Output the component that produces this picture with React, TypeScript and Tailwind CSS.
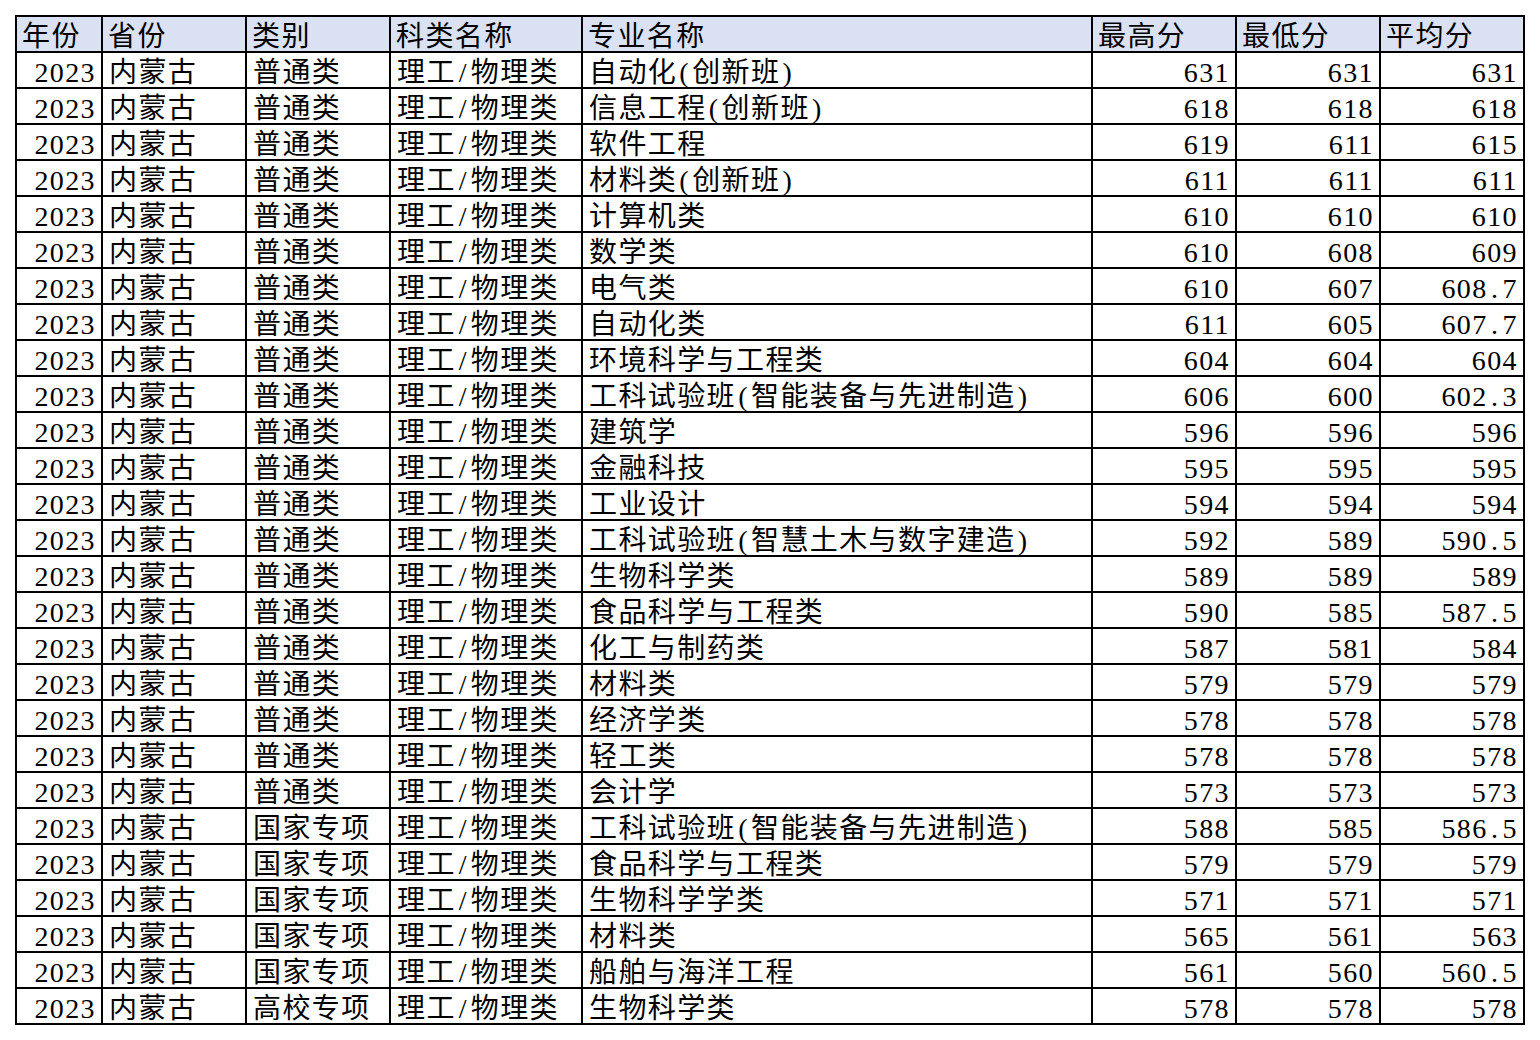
const rows: string[][] = [
  ["普通类", "理工/物理类", "自动化(创新班)", "631", "631", "631"],
  ["普通类", "理工/物理类", "信息工程(创新班)", "618", "618", "618"],
  ["普通类", "理工/物理类", "软件工程", "619", "611", "615"],
  ["普通类", "理工/物理类", "材料类(创新班)", "611", "611", "611"],
  ["普通类", "理工/物理类", "计算机类", "610", "610", "610"],
  ["普通类", "理工/物理类", "数学类", "610", "608", "609"],
  ["普通类", "理工/物理类", "电气类", "610", "607", "608.7"],
  ["普通类", "理工/物理类", "自动化类", "611", "605", "607.7"],
  ["普通类", "理工/物理类", "环境科学与工程类", "604", "604", "604"],
  ["普通类", "理工/物理类", "工科试验班(智能装备与先进制造)", "606", "600", "602.3"],
  ["普通类", "理工/物理类", "建筑学", "596", "596", "596"],
  ["普通类", "理工/物理类", "金融科技", "595", "595", "595"],
  ["普通类", "理工/物理类", "工业设计", "594", "594", "594"],
  ["普通类", "理工/物理类", "工科试验班(智慧土木与数字建造)", "592", "589", "590.5"],
  ["普通类", "理工/物理类", "生物科学类", "589", "589", "589"],
  ["普通类", "理工/物理类", "食品科学与工程类", "590", "585", "587.5"],
  ["普通类", "理工/物理类", "化工与制药类", "587", "581", "584"],
  ["普通类", "理工/物理类", "材料类", "579", "579", "579"],
  ["普通类", "理工/物理类", "经济学类", "578", "578", "578"],
  ["普通类", "理工/物理类", "轻工类", "578", "578", "578"],
  ["普通类", "理工/物理类", "会计学", "573", "573", "573"],
  ["国家专项", "理工/物理类", "工科试验班(智能装备与先进制造)", "588", "585", "586.5"],
  ["国家专项", "理工/物理类", "食品科学与工程类", "579", "579", "579"],
  ["国家专项", "理工/物理类", "生物科学学类", "571", "571", "571"],
  ["国家专项", "理工/物理类", "材料类", "565", "561", "563"],
  ["国家专项", "理工/物理类", "船舶与海洋工程", "561", "560", "560.5"],
  ["高校专项", "理工/物理类", "生物科学类", "578", "578", "578"],
];

const headers = ["年份", "省份", "类别", "科类名称", "专业名称", "最高分", "最低分", "平均分"];

// half-width punctuation is as wide as a digit in the sheet's font
function Txt({ s }: { s: string }) {
  return (
    <>
      {s.split(/([()/.])/).map((part, i) =>
        /^[()/.]$/.test(part) ? (
          <span key={i} className="inline-block w-[15px] text-center">
            {part}
          </span>
        ) : (
          part
        )
      )}
    </>
  );
}

export default function App() {
  return (
    <div className="min-h-screen bg-white pl-[15px] pt-[15px] font-['Liberation_Serif','Noto_Sans_CJK_SC',serif] text-black">
      <div className="grid w-[1510px] grid-cols-[84px_142px_142px_190px_508px_142px_142px_142px] auto-rows-[34px] gap-[2px] bg-black p-[2px] text-[28px] leading-[28px] tracking-[1.4px]">
        {headers.map((h) => (
          <div key={h} className="bg-[#d9e1f2] pl-[5px] pt-[6px] whitespace-nowrap overflow-hidden">
            {h}
          </div>
        ))}
        {rows.map((r, i) => (
          <div key={i} className="contents">
            <div className="bg-white pr-[5px] pt-[6px] text-right">2023</div>
            <div className="bg-white pl-[6px] pt-[6px] whitespace-nowrap">内蒙古</div>
            <div className="bg-white pl-[6px] pt-[6px] whitespace-nowrap">{r[0]}</div>
            <div className="bg-white pl-[6px] pt-[6px] whitespace-nowrap">
              <Txt s={r[1]} />
            </div>
            <div className="bg-white pl-[6px] pt-[6px] whitespace-nowrap">
              <Txt s={r[2]} />
            </div>
            <div className="bg-white pr-[5px] pt-[6px] text-right">{r[3]}</div>
            <div className="bg-white pr-[5px] pt-[6px] text-right">{r[4]}</div>
            <div className="bg-white pr-[5px] pt-[6px] text-right">
              <Txt s={r[5]} />
            </div>
          </div>
        ))}
      </div>
    </div>
  );
}
